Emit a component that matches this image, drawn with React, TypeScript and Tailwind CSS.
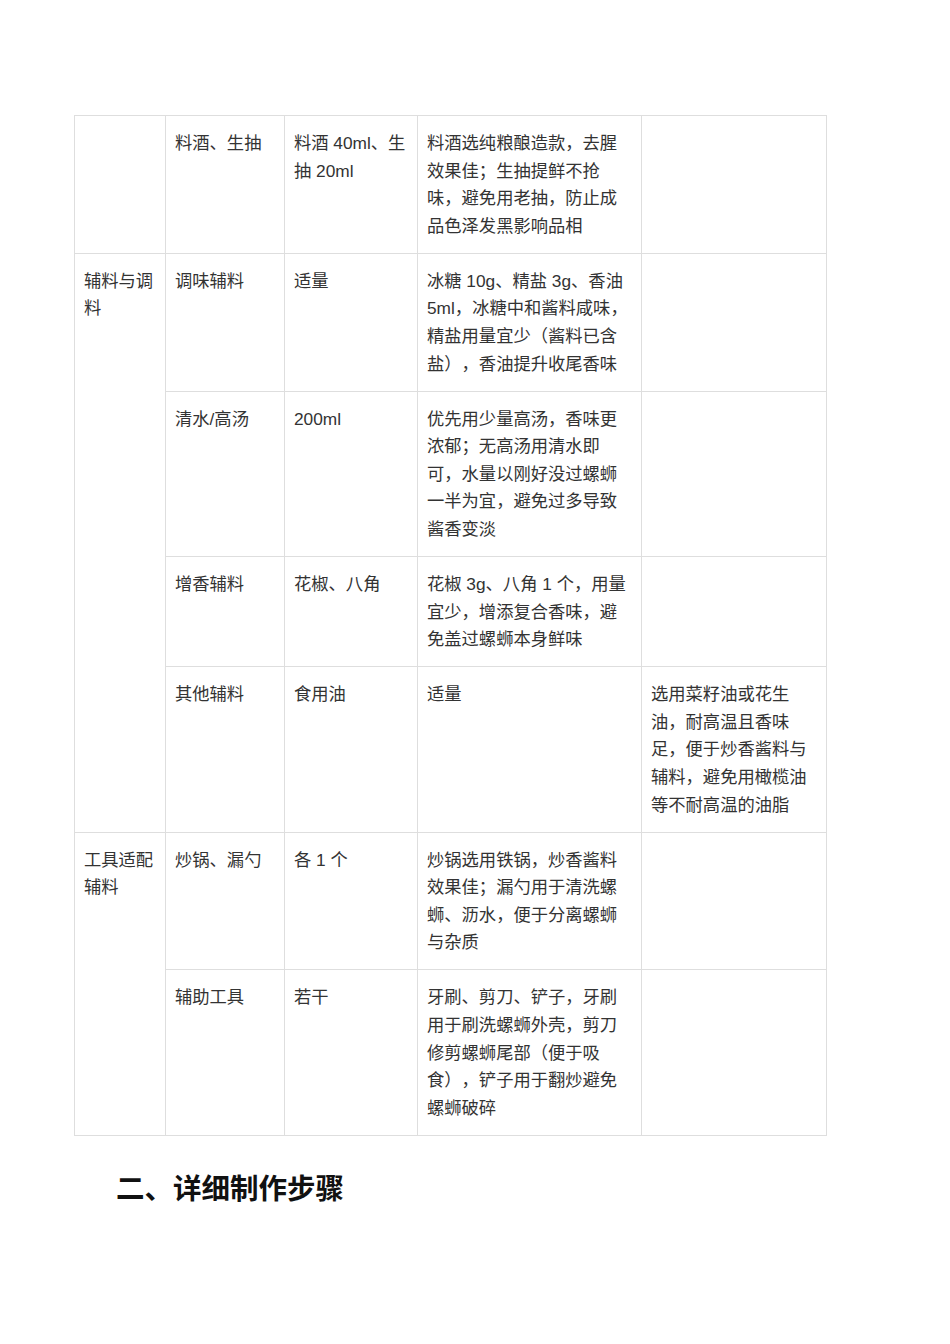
import React from "react";

const font = {
  fontFamily:
    '"Liberation Sans", "Noto Sans CJK SC", "Noto Sans CJK TC", "Noto Sans CJK JP", "Noto Sans CJK KR", sans-serif',
};

const td =
  "border border-[#dedede] align-top px-[9px] pt-[14px] pb-[12.45px] text-[17.3px] leading-[27.6px] text-[#333333] break-words [text-spacing-trim:space-all]";

export default function App() {
  return (
    <div className="min-h-[1344px] w-[950px] bg-white" style={font}>
      <div className="pt-[115px] pl-[74px]">
        <table className="table-fixed border-collapse w-[752px]">
          <colgroup>
            <col className="w-[91px]" />
            <col className="w-[119px]" />
            <col className="w-[133px]" />
            <col className="w-[224px]" />
            <col className="w-[185px]" />
          </colgroup>
          <tbody>
            <tr>
              <td className={td}></td>
              <td className={td}>料酒、生抽</td>
              <td className={td}>料酒 40ml、生抽 20ml</td>
              <td className={td}>料酒选纯粮酿造款，去腥效果佳；生抽提鲜不抢味，避免用老抽，防止成品色泽发黑影响品相</td>
              <td className={td}></td>
            </tr>
            <tr>
              <td className={td} rowSpan={4}>辅料与调料</td>
              <td className={td}>调味辅料</td>
              <td className={td}>适量</td>
              <td className={td}>冰糖 10g、精盐 3g、香油 5ml，冰糖中和酱料咸味，精盐用量宜少（酱料已含盐），香油提升收尾香味</td>
              <td className={td}></td>
            </tr>
            <tr>
              <td className={td}>清水/高汤</td>
              <td className={td}>200ml</td>
              <td className={td}>优先用少量高汤，香味更浓郁；无高汤用清水即可，水量以刚好没过螺蛳一半为宜，避免过多导致酱香变淡</td>
              <td className={td}></td>
            </tr>
            <tr>
              <td className={td}>增香辅料</td>
              <td className={td}>花椒、八角</td>
              <td className={td}>花椒 3g、八角 1 个，用量宜少，增添复合香味，避免盖过螺蛳本身鲜味</td>
              <td className={td}></td>
            </tr>
            <tr>
              <td className={td}>其他辅料</td>
              <td className={td}>食用油</td>
              <td className={td}>适量</td>
              <td className={td}>选用菜籽油或花生油，耐高温且香味足，便于炒香酱料与辅料，避免用橄榄油等不耐高温的油脂</td>
            </tr>
            <tr>
              <td className={td} rowSpan={2}>工具适配辅料</td>
              <td className={td}>炒锅、漏勺</td>
              <td className={td}>各 1 个</td>
              <td className={td}>炒锅选用铁锅，炒香酱料效果佳；漏勺用于清洗螺蛳、沥水，便于分离螺蛳与杂质</td>
              <td className={td}></td>
            </tr>
            <tr>
              <td className={td}>辅助工具</td>
              <td className={td}>若干</td>
              <td className={td}>牙刷、剪刀、铲子，牙刷用于刷洗螺蛳外壳，剪刀修剪螺蛳尾部（便于吸食），铲子用于翻炒避免螺蛳破碎</td>
              <td className={td}></td>
            </tr>
          </tbody>
        </table>
        <h2 className="mt-[35px] pl-[42px] text-[28.5px] leading-[37px] font-bold text-[#111111]">
          二、详细制作步骤
        </h2>
      </div>
    </div>
  );
}
